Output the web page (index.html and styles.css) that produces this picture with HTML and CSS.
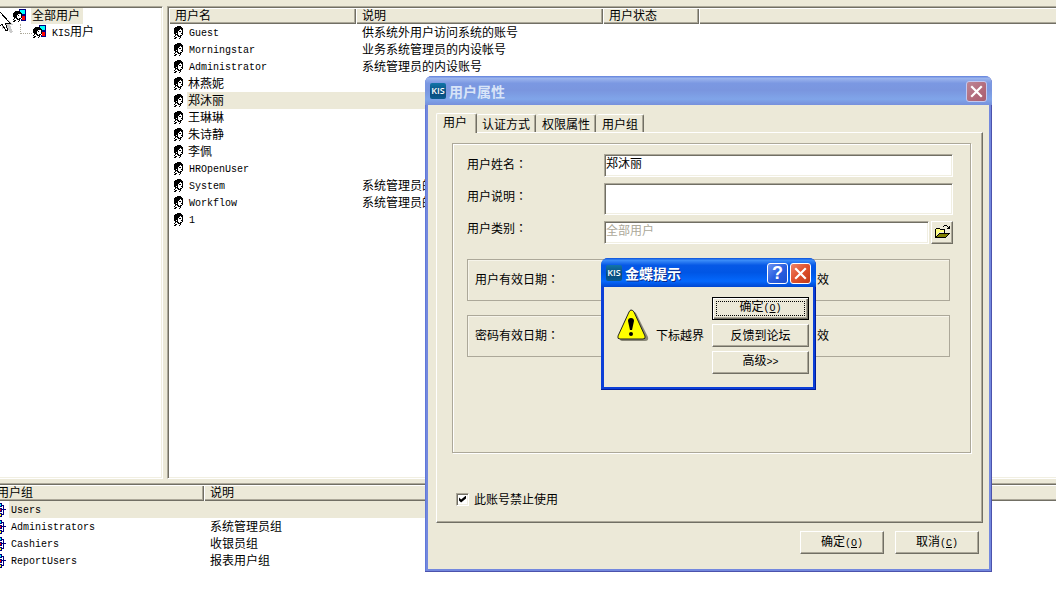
FILE: index.html
```html
<!DOCTYPE html>
<html lang="zh-CN">
<head>
  <meta charset="utf-8">
  <title>用户管理</title>
  <link rel="stylesheet" href="styles.css">
</head>
<body>
  <svg class="defs" width="0" height="0">
    <symbol id="face" viewBox="0 0 16 14">
      <path d="M6 0h4v1h-4zM4 1h7v1h-7zM3 2h9v1h-9zM3 3h6v1h-6zM10 3h2v1h-2zM3 4h5v1h-5zM11 4h1v1h-1zM3 5h4v1h-4zM8 5h2v1h-2zM11 5h1v1h-1zM3 6h4v1h-4zM11 6h1v1h-1zM3 7h2v1h-2zM6 7h1v1h-1zM10 7h2v1h-2zM4 8h3v1h-3zM11 8h1v1h-1zM4 9h1v1h-1zM6 9h2v1h-2zM9 9h2v1h-2zM3 10h1v1h-1zM7 10h3v1h-3zM4 11h2v1h-2zM9 11h1v1h-1zM3 12h2v1h-2zM8 12h1v1h-1z"/>
    </symbol>
    <symbol id="member" viewBox="0 0 14 14">
      <path fill="#000080" d="M6 0h7v6h-7zM8 6h5v6h-5z"/>
      <path fill="#0ff" d="M7 1h5v4h-5z"/>
      <path fill="#f00" d="M9 7h3v4h-3z"/>
      <path fill="#fff" d="M3 4h6v6h-6z"/>
      <path d="M2 2h5v1h-5zM1 3h7v1h-7zM0 4h9v1h-9zM0 5h5v1h-5zM8 5h1v1h-1zM0 6h4v1h-4zM5 6h1v1h-1zM8 6h1v1h-1zM0 7h4v1h-4zM8 7h1v1h-1zM1 8h3v1h-3zM8 8h1v1h-1zM1 9h1v1h-1zM3 9h2v1h-2zM6 9h2v1h-2zM0 10h1v1h-1zM4 10h3v1h-3zM1 11h2v1h-2zM6 11h1v1h-1zM0 12h2v1h-2zM5 12h1v1h-1z"/>
    </symbol>
    <symbol id="group" viewBox="0 0 16 14">
      <path fill="#000080" d="M3 0h6v4h-6zM3 5h6v4h-6zM3 10h6v4h-6zM9 2h2v1h-2zM9 6h4v1h-4zM9 11h2v1h-2zM10 2h1v10h-1z"/>
      <path fill="#0ff" d="M4 1h4v2h-4z"/>
      <path fill="#f00" d="M4 6h4v2h-4z"/>
      <path fill="#ff0" d="M4 11h4v2h-4z"/>
    </symbol>
    <symbol id="cross" viewBox="0 0 19 19">
      <path d="M5 5l9 9M14 5l-9 9" fill="none" stroke="#fff" stroke-width="2.2" stroke-linecap="square"/>
    </symbol>
  </svg>

  <main class="app">
    <div class="panes">
      <nav class="tree">
        <svg class="pointer" width="14" height="22" viewBox="0 0 14 22">
          <path d="M2 3v14l4-3 4 7 3-1-3-7h4z" fill="#999" opacity=".5"/>
          <path d="M-1-1v16l3-3 4 7 2-1-3-7h5z" fill="#fff" stroke="#000"/>
        </svg>
        <ul>
          <li>
            <a class="node current" href="#"><svg class="member"><use href="#member"/></svg><span>全部用户</span></a>
            <ul>
              <li><a class="node" href="#"><svg class="member"><use href="#member"/></svg><span><b class="en">KIS</b>用户</span></a></li>
            </ul>
          </li>
        </ul>
      </nav>

      <section class="list">
        <table class="users">
          <colgroup><col class="c-name"><col class="c-desc"><col class="c-state"><col></colgroup>
          <thead>
            <tr><th>用户名</th><th>说明</th><th>用户状态</th><th></th></tr>
          </thead>
          <tbody>
            <tr><td><svg class="icon"><use href="#face"/></svg><span class="en">Guest</span></td><td>供系统外用户访问系统的账号</td><td></td><td></td></tr>
            <tr><td><svg class="icon"><use href="#face"/></svg><span class="en">Morningstar</span></td><td>业务系统管理员的内设帐号</td><td></td><td></td></tr>
            <tr><td><svg class="icon"><use href="#face"/></svg><span class="en">Administrator</span></td><td>系统管理员的内设账号</td><td></td><td></td></tr>
            <tr><td><svg class="icon"><use href="#face"/></svg><span>林燕妮</span></td><td></td><td></td><td></td></tr>
            <tr class="selected"><td><svg class="icon"><use href="#face"/></svg><span>郑沐丽</span></td><td></td><td></td><td></td></tr>
            <tr><td><svg class="icon"><use href="#face"/></svg><span>王琳琳</span></td><td></td><td></td><td></td></tr>
            <tr><td><svg class="icon"><use href="#face"/></svg><span>朱诗静</span></td><td></td><td></td><td></td></tr>
            <tr><td><svg class="icon"><use href="#face"/></svg><span>李佩</span></td><td></td><td></td><td></td></tr>
            <tr><td><svg class="icon"><use href="#face"/></svg><span class="en">HROpenUser</span></td><td></td><td></td><td></td></tr>
            <tr><td><svg class="icon"><use href="#face"/></svg><span class="en">System</span></td><td>系统管理员的</td><td></td><td></td></tr>
            <tr><td><svg class="icon"><use href="#face"/></svg><span class="en">Workflow</span></td><td>系统管理员的</td><td></td><td></td></tr>
            <tr><td><svg class="icon"><use href="#face"/></svg><span class="en">1</span></td><td></td><td></td><td></td></tr>
          </tbody>
        </table>
      </section>
    </div>

    <section class="groups">
      <table>
        <colgroup><col class="g-name"><col class="g-desc"><col></colgroup>
        <thead>
          <tr><th>用户组</th><th>说明</th><th></th></tr>
        </thead>
        <tbody>
          <tr class="selected"><td><svg class="icon"><use href="#group"/></svg><span class="en">Users</span></td><td></td><td></td></tr>
          <tr><td><svg class="icon"><use href="#group"/></svg><span class="en">Administrators</span></td><td>系统管理员组</td><td></td></tr>
          <tr><td><svg class="icon"><use href="#group"/></svg><span class="en">Cashiers</span></td><td>收银员组</td><td></td></tr>
          <tr><td><svg class="icon"><use href="#group"/></svg><span class="en">ReportUsers</span></td><td>报表用户组</td><td></td></tr>
        </tbody>
      </table>
    </section>
  </main>

  <!-- 用户属性 -->
  <form class="window props">
    <header class="titlebar">
      <span class="logo">KIS</span>
      <h1>用户属性</h1>
      <button type="button" class="cap close" aria-label="关闭"><svg><use href="#cross"/></svg></button>
    </header>
    <div class="props-body">
      <div class="tabs">
        <button type="button" class="tab active">用户</button>
        <button type="button" class="tab">认证方式</button>
        <button type="button" class="tab">权限属性</button>
        <button type="button" class="tab">用户组</button>
      </div>
      <div class="sheet">
        <div class="frame">
          <div class="fields">
            <div class="labels">
              <label for="uname">用户姓名<i lang="zh-TW">：</i></label>
              <label for="udesc">用户说明<i lang="zh-TW">：</i></label>
              <label for="utype">用户类别<i lang="zh-TW">：</i></label>
            </div>
            <div class="inputs">
              <input type="text" id="uname" value="郑沐丽">
              <input type="text" id="udesc" class="tall">
              <div class="pick">
                <input type="text" id="utype" value="全部用户" disabled>
                <button type="button" class="btn open" aria-label="打开">
                  <svg width="17" height="15" viewBox="0 0 17 15">
                    <path d="M1 4h1v-1h4v1h5v3h-6l-4 6z" fill="#ffff80"/>
                    <path d="M5 8h11l-4 5h-11z" fill="#808000"/>
                    <path d="M1 13h1v-1h-1zM1 4h1v9h-1zM2 3h4v1h-4zM6 4h5v1h-5zM10 5h1v3h-1zM5 8h11v1h-11zM4 9h1v1h-1zM3 10h1v1h-1zM2 11h1v1h-1zM14 9h1v1h-1zM13 10h1v1h-1zM12 11h1v1h-1zM1 12h11v1h-11zM9 1h1v1h-1zM10 0h3v1h-3zM13 1h1v1h-1zM15 1h1v3h-1zM13 3h2v1h-2zM14 2h1v1h-1z"/>
                  </svg>
                </button>
              </div>
            </div>
          </div>
          <div class="period"><span>用户有效日期<i lang="zh-TW">：</i></span><span>效</span></div>
          <div class="period"><span>密码有效日期<i lang="zh-TW">：</i></span><span>效</span></div>
        </div>
        <div class="check">
          <input type="checkbox" id="ban" checked>
          <label for="ban">此账号禁止使用</label>
        </div>
      </div>
      <footer>
        <button type="button" class="btn">确定<span class="en">(<u>O</u>)</span></button>
        <button type="button" class="btn">取消<span class="en">(<u>C</u>)</span></button>
      </footer>
    </div>
  </form>

  <!-- 提示框 -->
  <div class="window alert" role="alertdialog">
    <header class="titlebar">
      <span class="logo">KIS</span>
      <h1>金蝶提示</h1>
      <button class="cap help" aria-label="帮助">?</button>
      <button class="cap close" aria-label="关闭"><svg><use href="#cross"/></svg></button>
    </header>
    <div class="alert-body">
      <svg class="warn" width="32" height="34" viewBox="0 0 32 34">
        <path d="M17 3q2 0 3 3l11 22q1 4-3 4h-23q-2 0-2-2z" fill="#8a8878"/>
        <path d="M14 1q2 0 3 2l11 24q1 3-2 3h-23q-3 0-2-3l11-24q1-2 2-2z" fill="#ff0" stroke="#222"/>
        <path d="M14 9q3 0 3 3l-2 9h-2l-2-9q0-3 3-3z"/>
        <circle cx="14" cy="25" r="2"/>
      </svg>
      <p>下标越界</p>
      <div class="actions">
        <button class="btn default">确定<span class="en">(<u>O</u>)</span></button>
        <button class="btn">反馈到论坛</button>
        <button class="btn">高级<span class="en">&gt;&gt;</span></button>
      </div>
    </div>
  </div>
</body>
</html>
```
FILE: styles.css
```css
*{
  box-sizing: border-box;
}
body{
  margin: 0;
  overflow: hidden;
  background: #ece9d8;
  color: #000;
}
body, button, input{
  font: 12px/16px "Noto Sans CJK SC", sans-serif;
}
button, input{
  margin: 0;
  padding: 0;
  border: 0;
  border-radius: 0;
  color: #000;
}
svg{
  shape-rendering: crispEdges;
}
.defs{
  position: absolute;
}
.en{
  font: 10px/16px "Liberation Mono", monospace;
}
/* 冒号居中 */
i{
  font-family: "Noto Sans CJK TC", sans-serif;
  font-style: normal;
}

/* 背景窗口 */
.app{
  display: flex;
  flex-direction: column;
  gap: 4px;
  height: 100vh;
  padding-top: 6px;
}
.panes{
  flex: 1;
  display: flex;
  gap: 4px;
  min-height: 0;
}
.tree, .list, .groups{
  background: #fff;
  border: 1px solid #aca899;
  border-right-color: #fff;
  border-bottom-color: #fff;
  box-shadow: inset 1px 1px #716f64, inset -1px -1px #f1efe2;
  padding: 1px;
  overflow: hidden;
}
.tree{
  position: relative;
  width: 163px;
  border-left: 0;
  box-shadow: inset 0 1px #716f64, inset -1px -1px #f1efe2;
}
.list{
  flex: 1;
  border-right: 0;
  padding-right: 0;
  box-shadow: inset 1px 1px #716f64, inset 0 -1px #f1efe2;
}
.groups{
  height: 117px;
  border-width: 1px 0 0;
  padding: 1px 0 0;
  box-shadow: inset 0 1px #716f64;
}
.tree ul{
  list-style: none;
  margin: 0;
  padding: 0 0 0 12px;
}
.tree ul ul{
  position: relative;
  padding-left: 20px;
}
.tree ul ul::before{
  content: "";
  position: absolute;
  left: 7px;
  top: 0;
  width: 11px;
  height: 9px;
  border-left: 1px dotted #aca899;
  border-bottom: 1px dotted #aca899;
}
.node{
  display: flex;
  gap: 4px;
  color: #000;
  text-decoration: none;
}
.node span{
  height: 16px;
  padding: 0 3px 0 1px;
  line-height: 14px;
}
.node .en{
  line-height: 14px;
}
.current span{
  background: #ece9d8;
}
.member{
  width: 14px;
  height: 14px;
  margin-top: 1px;
}
.pointer{
  position: absolute;
  left: 0;
  top: 5px;
}

table{
  width: 100%;
  table-layout: fixed;
  border-collapse: collapse;
}
.groups table{
  margin-left: -9px;
  width: calc(100% + 9px);
}
.c-name{ width: 187px; }
.c-desc{ width: 247px; }
.c-state{ width: 96px; }
.g-name{ width: 213px; }
.g-desc{ width: 400px; }
th{
  height: 16px;
  padding: 0 6px;
  font-weight: normal;
  line-height: 14px;
  text-align: left;
  vertical-align: top;
  background: #ece9d8;
  box-shadow: inset 1px 1px #fff, inset -1px -1px #716f64, inset -2px -2px #aca899;
}
th:last-child{
  box-shadow: inset 1px 1px #fff, inset 0 -1px #716f64, inset 0 -2px #aca899;
}
td{
  height: 17px;
  padding: 0 6px;
  line-height: 16px;
  white-space: nowrap;
  vertical-align: top;
}
td:first-child{
  display: flex;
  padding: 0 0 0 2px;
}
td span{
  flex: 1;
  height: 17px;
  padding-left: 1px;
}
td .en{
  padding-left: 2px;
  line-height: 20px;
}
.selected span, .selected td + td{
  background: #ece9d8;
}
.selected td:last-child{
  background: none;
}
.icon{
  width: 16px;
  height: 14px;
  margin-top: 2px;
}

/* 窗口 */
.window{
  position: absolute;
  padding-bottom: 3px;
  border-radius: 7px 7px 0 0;
}
.props{
  left: 425px;
  top: 76px;
  width: 567px;
  background: #7388de;
  box-shadow: inset -1px -1px #4c52ac, inset 1px 0 #6078d8;
}
.titlebar{
  display: flex;
  align-items: center;
  gap: 2px;
  height: 29px;
  padding: 1px 5px 0;
  border-radius: 7px 7px 0 0;
  background: linear-gradient(#5f80dc, #9cb5ed 8%, #7b98e2 25%, #7a96df 50%, #80a5e9 80%, #7790dc);
}
.titlebar h1{
  flex: 1;
  margin: 0 0 0 1px;
  font-size: 14px;
  line-height: 20px;
  font-weight: bold;
  color: #d8e4f8;
}
.logo{
  width: 16px;
  height: 16px;
  border-radius: 2px;
  background: linear-gradient(#1275a8, #084a7c 60%, #0a5c90);
  color: #fff;
  font: 600 9px/16px "Open Sans", sans-serif;
  text-align: center;
}
.cap{
  width: 21px;
  height: 21px;
  border: 1px solid #fff;
  border-radius: 3px;
  color: #fff;
}
.cap svg{
  display: block;
  width: 19px;
  height: 19px;
  shape-rendering: auto;
}
.close{
  background: linear-gradient(135deg, #ee8468, #e0502c 50%, #c03a18);
}
.props .close{
  background: linear-gradient(135deg, #bd8695, #b26a7b 60%, #a85f72);
  border-color: #c3c8ef;
}
.help{
  background: linear-gradient(135deg, #6b93f2, #2a5fe0 50%, #1c4fd0);
  font: bold 18px/19px "Liberation Sans", sans-serif;
}
.props-body{
  margin: 0 3px;
  padding: 7px 6px 15px 8px;
  background: #ece9d8;
}
.tabs{
  display: flex;
  align-items: flex-end;
  height: 20px;
}
.tab{
  height: 18px;
  margin-right: 1px;
  padding: 0 5px;
  background: #ece9d8;
  border-top: 1px solid #fff;
  border-right: 1px solid #716f64;
  border-radius: 2px 2px 0 0;
  box-shadow: inset -1px 0 #aca899;
  line-height: 16px;
}
.tab.active{
  position: relative;
  height: 20px;
  margin: 0 0 -1px;
  padding: 0 9px 3px 6px;
  border-left: 1px solid #fff;
}
.sheet{
  padding: 10px 11px 15px 15px;
  border: 1px solid #fff;
  border-right-color: #716f64;
  border-bottom-color: #716f64;
  box-shadow: inset -1px -1px #aca899;
}
.frame{
  min-height: 310px;
  padding: 4px 17px 0 14px;
  border: 1px solid #aca899;
  box-shadow: 1px 1px #fff, inset 1px 1px #fff;
}
.fields{
  display: flex;
}
.labels{
  width: 137px;
  line-height: 32px;
}
.labels label{
  display: block;
}
.inputs{
  flex: 1;
  display: flex;
  flex-direction: column;
  gap: 6px;
  padding-top: 6px;
}
input[type=text]{
  width: 100%;
  height: 23px;
  padding: 0 1px 7px;
  background: #fff;
  border: 1px solid #aca899;
  border-right-color: #fff;
  border-bottom-color: #fff;
  box-shadow: inset 1px 1px #716f64, inset -1px -1px #f1efe2;
}
input[type=text].tall{
  height: 32px;
}
input:disabled{
  color: #aca899;
}
.pick{
  display: flex;
  gap: 2px;
}
.btn{
  height: 23px;
  background: #ece9d8;
  border: 1px solid #fff;
  border-right-color: #716f64;
  border-bottom-color: #716f64;
  box-shadow: inset -1px -1px #aca899;
}
.open{
  flex: none;
  width: 22px;
}
.open svg{
  display: block;
  margin: 0 auto;
}
.period{
  display: flex;
  justify-content: space-between;
  height: 42px;
  margin: 15px 3px 0 0;
  padding: 0 120px 0 7px;
  border: 1px solid #aca899;
  box-shadow: inset 1px 1px #f6f4ea;
  line-height: 38px;
}
.period + .period{
  margin-top: 14px;
}
.check{
  display: flex;
  align-items: center;
  gap: 5px;
  height: 16px;
  margin: 38px 0 0 4px;
}
.check input{
  appearance: none;
  position: relative;
  width: 13px;
  height: 13px;
  background: #fff;
  border: 1px solid #aca899;
  border-right-color: #fff;
  border-bottom-color: #fff;
  box-shadow: inset 1px 1px #716f64, inset -1px -1px #f1efe2;
}
.check input:checked::after{
  content: "";
  position: absolute;
  left: 2px;
  top: 2px;
  width: 7px;
  height: 7px;
  background: #000;
  clip-path: polygon(0 28%, 30% 58%, 100% 0, 100% 42%, 30% 100%, 0 72%);
}
footer{
  display: flex;
  justify-content: flex-end;
  gap: 11px;
  margin-top: 8px;
  padding-right: 4px;
}
footer .btn{
  width: 84px;
}

.alert{
  left: 601px;
  top: 258px;
  width: 215px;
  background: #0b3fd8;
  box-shadow: inset -1px -1px #001c9c;
}
.alert .titlebar{
  background: linear-gradient(#0a50d8, #3b8cf8 8%, #0658e6 25%, #0056e5 50%, #0468fc 80%, #0046d0);
}
.alert h1{
  color: #fff;
  text-shadow: 1px 1px #0a2a88;
}
.alert-body{
  display: flex;
  margin: 0 3px;
  padding: 10px 4px 13px 13px;
  background: #ece9d8;
}
.warn{
  margin-top: 12px;
  shape-rendering: auto;
}
.alert p{
  flex: 1;
  margin: 30px 0 0 7px;
}
.actions{
  display: flex;
  flex-direction: column;
  gap: 4px;
}
.actions .btn{
  width: 97px;
  padding-bottom: 2px;
}
.actions .default{
  border-color: #000;
  outline: 1px dotted #000;
  outline-offset: -5px;
  box-shadow: inset 1px 1px #fff, inset -1px -1px #716f64, inset -2px -2px #aca899;
}
```
